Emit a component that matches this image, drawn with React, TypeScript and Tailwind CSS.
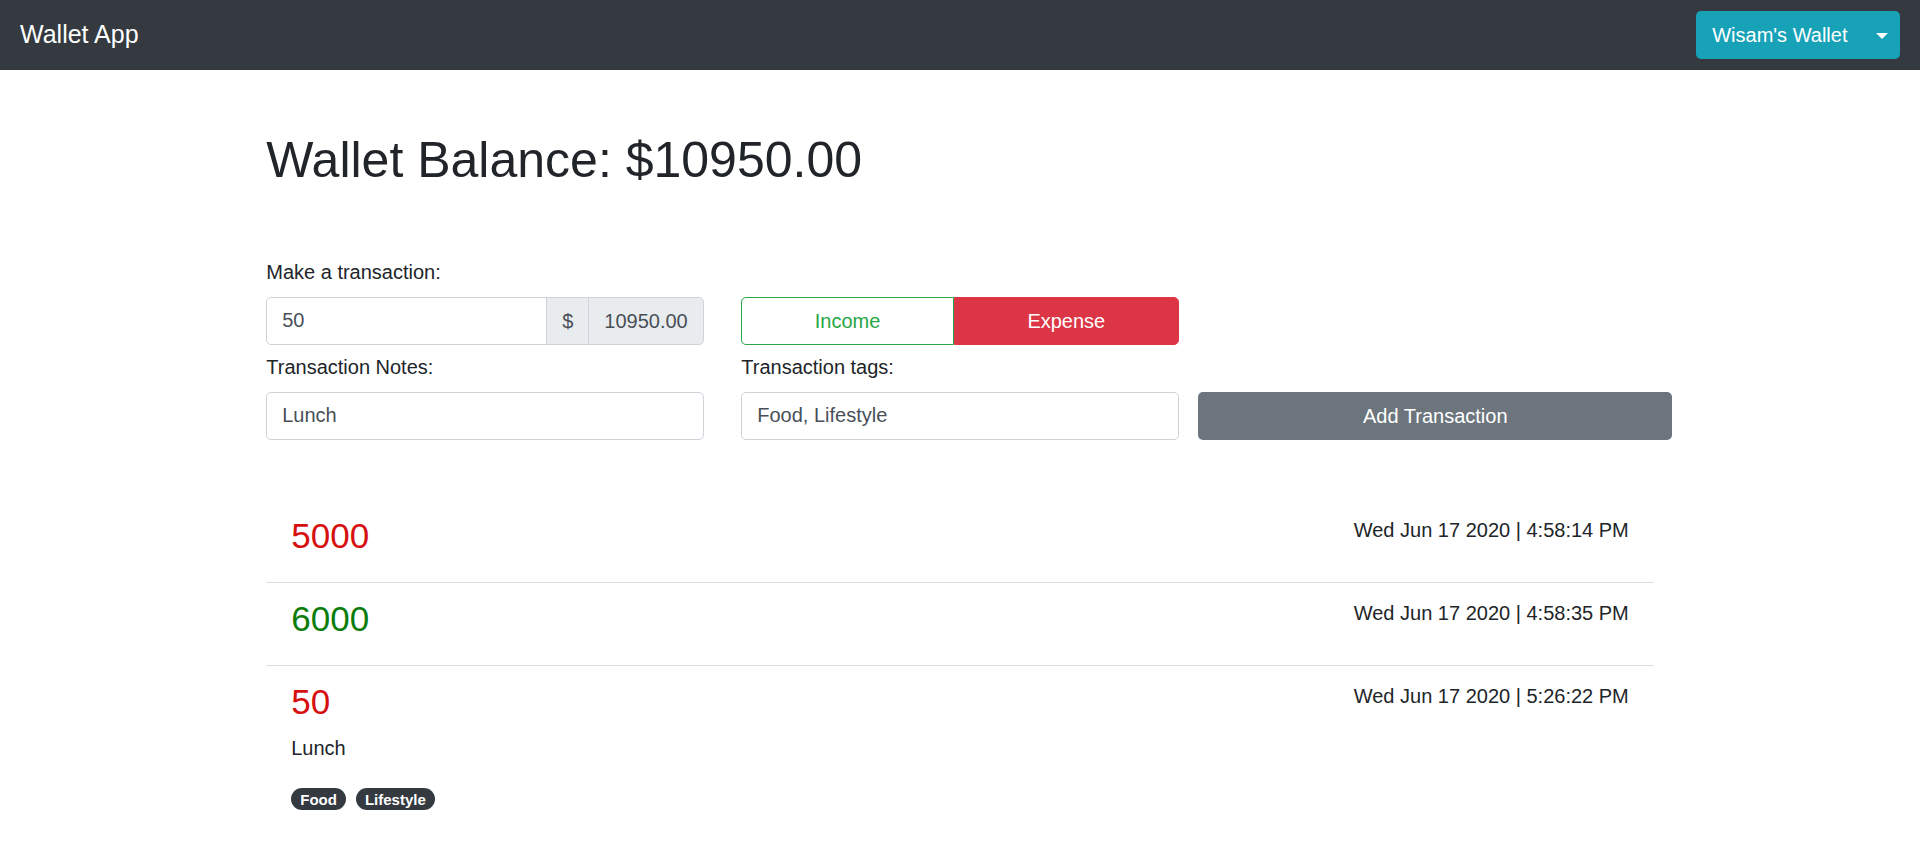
import React from "react";

type Txn = {
  amount: string;
  kind: "income" | "expense";
  date: string;
  notes?: string;
  tags?: string[];
};

const transactions: Txn[] = [
  { amount: "5000", kind: "expense", date: "Wed Jun 17 2020 | 4:58:14 PM" },
  { amount: "6000", kind: "income", date: "Wed Jun 17 2020 | 4:58:35 PM" },
  {
    amount: "50",
    kind: "expense",
    date: "Wed Jun 17 2020 | 5:26:22 PM",
    notes: "Lunch",
    tags: ["Food", "Lifestyle"],
  },
];

function Navbar() {
  return (
    <nav className="h-[70px] bg-[#343a40] flex items-center justify-between px-[20px]">
      <span className="text-white text-[25px] leading-[37.5px]">Wallet App</span>
      <div className="flex h-[47.5px] rounded-[5px] bg-[#17a2b8] text-white text-[20px]">
        <button className="pl-[16px] pr-[16px] leading-[30px]">Wisam's Wallet</button>
        <button className="w-[36.5px] flex items-center justify-center">
          <span className="w-0 h-0 border-t-[6px] border-t-white border-x-[6px] border-x-transparent mt-[1px]" />
        </button>
      </div>
    </nav>
  );
}

function TransactionForm() {
  const inputCls =
    "w-full h-[47.5px] border border-[#ced4da] rounded-[5px] px-[15px] text-[20px] text-[#495057] bg-white outline-none";
  return (
    <div className="mt-[67px]">
      <div className="flex">
        <div className="w-[437.5px] shrink-0">
          <label className="block text-[20px] leading-[30px] mb-[10px]">Make a transaction:</label>
          <div className="flex h-[47.5px] text-[20px] text-[#495057]">
            <input
              defaultValue="50"
              className="flex-1 min-w-0 h-full border border-[#ced4da] rounded-l-[5px] px-[15px] outline-none"
            />
            <span className="flex items-center px-[15px] bg-[#e9ecef] border border-[#ced4da] -ml-px">$</span>
            <span className="flex items-center px-[15px] bg-[#e9ecef] border border-[#ced4da] -ml-px rounded-r-[5px]">
              10950.00
            </span>
          </div>
        </div>
        <div className="w-[437.5px] shrink-0 ml-[37.5px] pt-[40px]">
          <div className="flex h-[47.5px] text-[20px]">
            <button className="flex-auto border border-[#28a745] text-[#28a745] bg-white rounded-l-[5px] px-[15px]">
              Income
            </button>
            <button className="flex-auto border border-[#dc3545] bg-[#dc3545] text-white rounded-r-[5px] px-[15px]">
              Expense
            </button>
          </div>
        </div>
      </div>
      <div className="flex mt-[7.5px]">
        <div className="w-[437.5px] shrink-0">
          <label className="block text-[20px] leading-[30px] mb-[10px]">Transaction Notes:</label>
          <input defaultValue="Lunch" className={inputCls} />
        </div>
        <div className="w-[437.5px] shrink-0 ml-[37.5px]">
          <label className="block text-[20px] leading-[30px] mb-[10px]">Transaction tags:</label>
          <input defaultValue="Food, Lifestyle" className={inputCls} />
        </div>
        <div className="w-[474px] shrink-0 ml-[19.5px] pt-[40px]">
          <button className="w-full h-[47.5px] bg-[#6c757d] text-white text-[20px] rounded-[5px]">
            Add Transaction
          </button>
        </div>
      </div>
    </div>
  );
}

function TransactionList() {
  return (
    <ul className="mt-[60px]">
      {transactions.map((t, i) => (
        <li
          key={i}
          className={
            "px-[25px] py-[15px] " +
            (i < transactions.length - 1 ? "border-b border-[rgba(0,0,0,0.125)]" : "")
          }
        >
          <div className="flex justify-between items-start">
            <div>
              <h3
                className={
                  "text-[35px] leading-[42px] mb-[10px] " +
                  (t.kind === "income" ? "text-[#0a7d0a]" : "text-[#d60f0f]")
                }
              >
                {t.amount}
              </h3>
              {t.notes && <p className="text-[20px] leading-[30px] mb-[20px]">{t.notes}</p>}
              {t.tags && (
                <div className="text-[20px] leading-[30px]">
                  {t.tags.map((tag) => (
                    <span
                      key={tag}
                      className="inline-block mr-[10px] px-[9px] py-[3.75px] rounded-full bg-[#343a40] text-white text-[15px] font-bold leading-none align-baseline"
                    >
                      {tag}
                    </span>
                  ))}
                </div>
              )}
            </div>
            <span className="text-[20px] leading-[30px]">{t.date}</span>
          </div>
        </li>
      ))}
    </ul>
  );
}

export default function App() {
  return (
    <div className="min-h-screen bg-white text-[#212529] font-['Liberation_Sans',Arial,sans-serif]">
      <Navbar />
      <div className="w-[1387.5px] mx-auto">
        <h1 className="mt-[60px] text-[50px] leading-[60px] font-normal">Wallet Balance: $10950.00</h1>
        <TransactionForm />
        <TransactionList />
      </div>
    </div>
  );
}
